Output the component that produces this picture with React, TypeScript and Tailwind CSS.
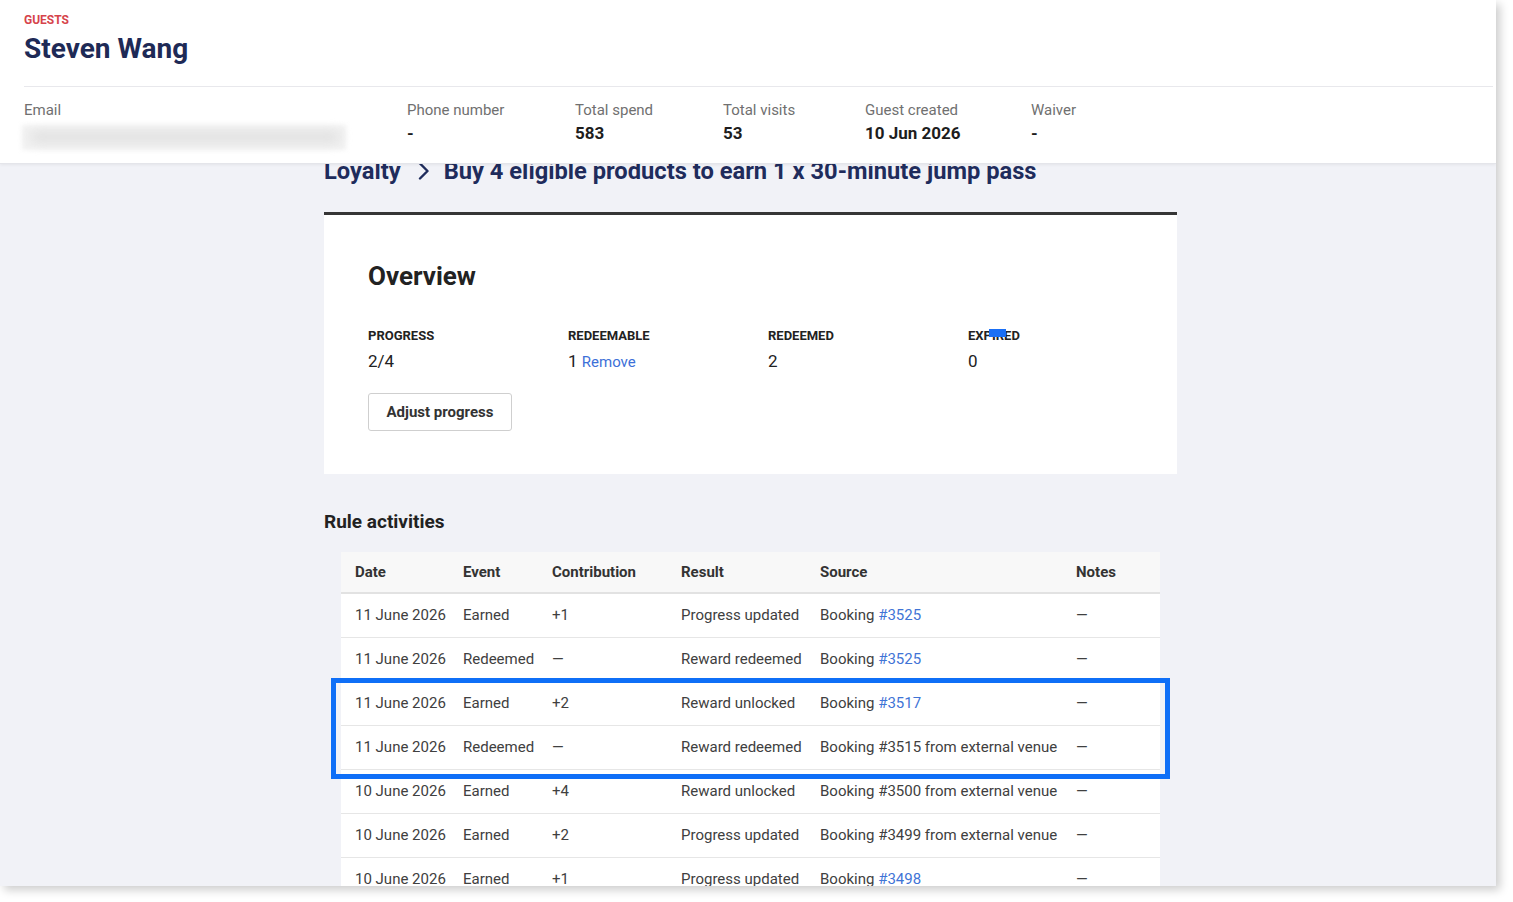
import React from 'react';

const rows = [
  { date: '11 June 2026', event: 'Earned', contrib: '+1', result: 'Progress updated', booking: '#3525', link: true },
  { date: '11 June 2026', event: 'Redeemed', contrib: '—', result: 'Reward redeemed', booking: '#3525', link: true },
  { date: '11 June 2026', event: 'Earned', contrib: '+2', result: 'Reward unlocked', booking: '#3517', link: true },
  { date: '11 June 2026', event: 'Redeemed', contrib: '—', result: 'Reward redeemed', booking: '#3515', link: false },
  { date: '10 June 2026', event: 'Earned', contrib: '+4', result: 'Reward unlocked', booking: '#3500', link: false },
  { date: '10 June 2026', event: 'Earned', contrib: '+2', result: 'Progress updated', booking: '#3499', link: false },
  { date: '10 June 2026', event: 'Earned', contrib: '+1', result: 'Progress updated', booking: '#3498', link: true },
];

const guestStats = [
  { label: 'Phone number', value: '-', w: 'w-[168px]' },
  { label: 'Total spend', value: '583', w: 'w-[148px]' },
  { label: 'Total visits', value: '53', w: 'w-[142px]' },
  { label: 'Guest created', value: '10 Jun 2026', w: 'w-[166px]' },
  { label: 'Waiver', value: '-', w: 'w-[140px]' },
];

function Cell({ className, children }: { className: string; children: React.ReactNode }) {
  return <div className={`shrink-0 pl-[14px] ${className}`}>{children}</div>;
}

export default function App() {
  return (
    <div className="w-full h-[902px] bg-white overflow-hidden font-['Roboto',sans-serif]">
      <div className="w-[1496px] h-[886px] flex flex-col overflow-hidden bg-[#f1f2f7] shadow-[4px_4px_9px_rgba(0,0,0,0.2)]">
        {/* guest header */}
        <header className="relative z-10 shrink-0 bg-white pl-6 pr-[3px] pt-[12px] pb-[19px] border-b border-[#e4e5ea] shadow-[0_1px_3px_rgba(0,0,0,0.06)]">
          <div className="text-[12px] leading-[16px] font-bold uppercase text-[#d6434b]">Guests</div>
          <h1 className="mt-[4px] text-[28px] leading-[34px] font-bold text-[#1e2a56]">Steven Wang</h1>
          <div className="mt-[20px] border-t border-[#e8e8ec]" />
          <div className="flex pt-[13px]">
            <div className="w-[383px] shrink-0">
              <div className="text-[15px] leading-[20px] text-[#707070]">Email</div>
              <div className="relative mt-[2px] h-[22px] -ml-[2px]">
                <div className="absolute left-0 top-[3px] w-[324px] h-[25px] bg-[#f2f2f2] blur-[2px]" />
                <div className="absolute left-[8px] top-[10px] w-[310px] h-[10px] rounded-full bg-[#dedede] blur-[6px]" />
              </div>
            </div>
            {guestStats.map((s) => (
              <div key={s.label} className={`${s.w} shrink-0`}>
                <div className="text-[15px] leading-[20px] text-[#707070]">{s.label}</div>
                <div className="mt-[2px] text-[17px] leading-[22px] font-bold text-[#1d1d1d]">{s.value}</div>
              </div>
            ))}
          </div>
        </header>

        {/* loyalty content */}
        <main className="flex-1 overflow-hidden">
          <div className="w-[853px] ml-[324px]">
            <div className="-mt-[7px] flex items-center text-[23.7px] leading-[28px] font-bold text-[#1f2c5c]">
              <span>Loyalty</span>
              <svg width="12" height="18" viewBox="0 0 12 18" className="ml-[17px] mr-[14px]" fill="none">
                <path d="M2 1.5 L9.5 9 L2 16.5" stroke="#1f2c5c" strokeWidth="2.4" strokeLinecap="round" strokeLinejoin="round" />
              </svg>
              <span>Buy 4 eligible products to earn 1 x 30-minute jump pass</span>
            </div>

            <div className="mt-[27px] h-[3px] bg-[#363636]" />
            <section className="bg-white pl-[44px] pt-[45px] pb-[43px]">
              <h2 className="text-[26px] leading-[32px] font-bold text-[#222]">Overview</h2>
              <div className="mt-[36px] flex">
                <div className="w-[200px]">
                  <div className="text-[13px] leading-[16px] font-bold uppercase text-[#222]">Progress</div>
                  <div className="mt-[6px] text-[17px] leading-[22px] text-[#222]">2/4</div>
                </div>
                <div className="w-[200px]">
                  <div className="text-[13px] leading-[16px] font-bold uppercase text-[#222]">Redeemable</div>
                  <div className="mt-[6px] text-[17px] leading-[22px] text-[#222]">
                    1 <span className="text-[15px] text-[#3d70d8]">Remove</span>
                  </div>
                </div>
                <div className="w-[200px]">
                  <div className="text-[13px] leading-[16px] font-bold uppercase text-[#222]">Redeemed</div>
                  <div className="mt-[6px] text-[17px] leading-[22px] text-[#222]">2</div>
                </div>
                <div className="relative w-[200px]">
                  <div className="text-[13px] leading-[16px] font-bold uppercase text-[#222]">Expired</div>
                  <div className="mt-[6px] text-[17px] leading-[22px] text-[#222]">0</div>
                  <div className="absolute left-[21px] top-[1px] w-[17px] h-[8px] bg-[#1a6ff5]" />
                </div>
              </div>
              <button className="mt-[20px] h-[38px] w-[144px] rounded-[3px] border border-[#cfcfcf] bg-white text-[15px] font-bold text-[#333]">
                Adjust progress
              </button>
            </section>

            <h3 className="mt-[36px] text-[19px] leading-[24px] font-bold text-[#222]">Rule activities</h3>

            <div className="relative mt-[18px] mx-[17px]">
              <div className="flex items-center h-[42px] bg-[#f8f8f8] border-b-2 border-[#e2e2e2] text-[15px] font-bold text-[#333]">
                <Cell className="w-[108px]">Date</Cell>
                <Cell className="w-[89px]">Event</Cell>
                <Cell className="w-[129px]">Contribution</Cell>
                <Cell className="w-[139px]">Result</Cell>
                <Cell className="w-[256px]">Source</Cell>
                <Cell className="flex-1">Notes</Cell>
              </div>
              {rows.map((r, i) => (
                <div key={i} className="flex items-center h-[44px] bg-white border-b border-[#e6e6e6] text-[15px] text-[#404040]">
                  <Cell className="w-[108px]">{r.date}</Cell>
                  <Cell className="w-[89px]">{r.event}</Cell>
                  <Cell className="w-[129px]">{r.contrib}</Cell>
                  <Cell className="w-[139px]">{r.result}</Cell>
                  <Cell className="w-[256px]">
                    Booking{' '}
                    {r.link ? <span className="text-[#3f74d6]">{r.booking}</span> : <span>{r.booking} from external venue</span>}
                  </Cell>
                  <Cell className="flex-1">—</Cell>
                </div>
              ))}
              <div className="absolute left-[-10px] top-[126px] w-[839px] h-[101px] border-[5px] border-[#0f6ff7]" />
            </div>
          </div>
        </main>
      </div>
    </div>
  );
}
